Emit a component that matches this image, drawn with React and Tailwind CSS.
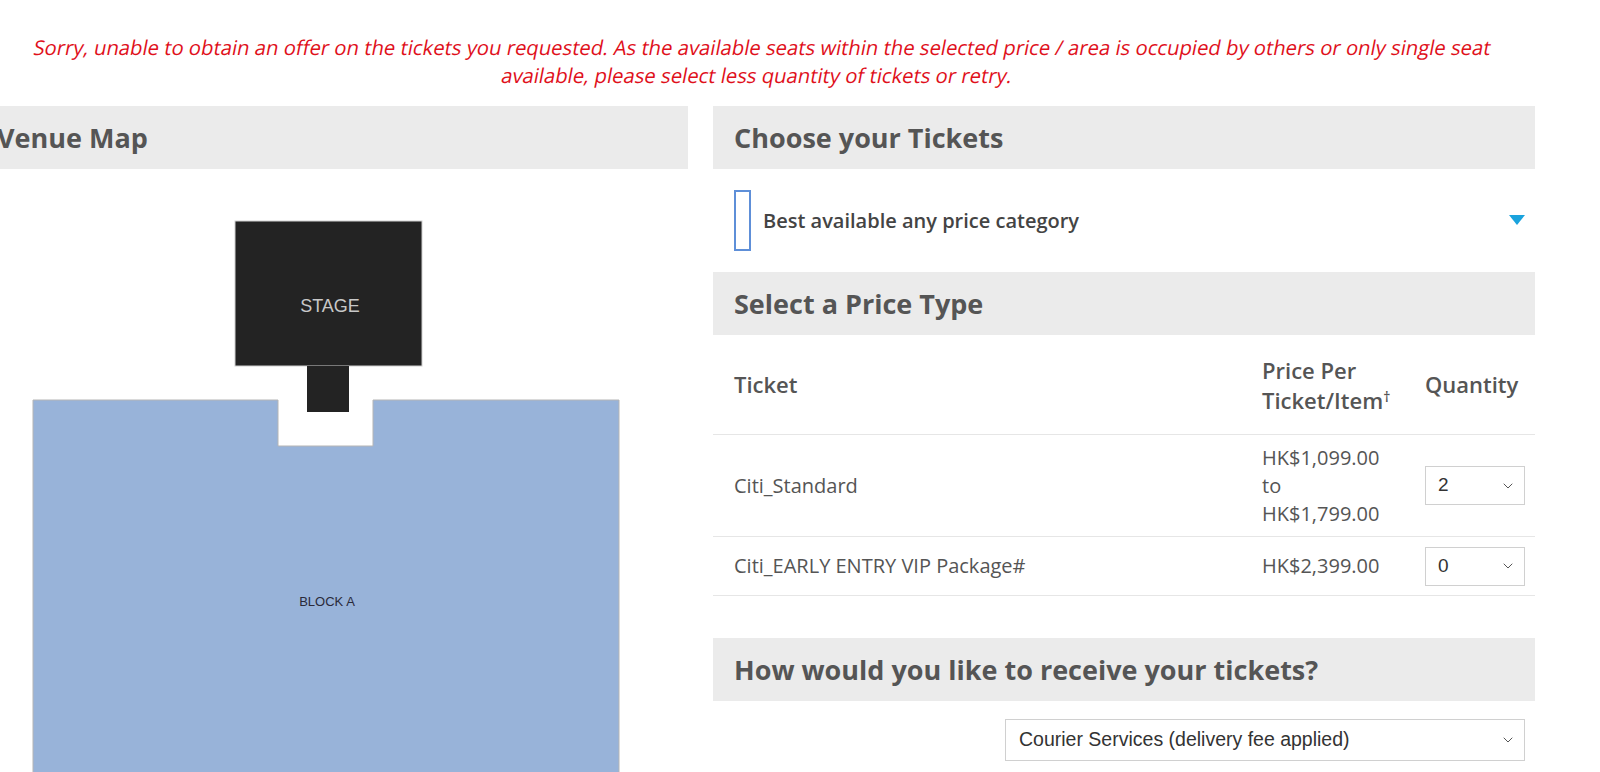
import { ChevronDown } from 'lucide-react';

function SectionHeader({ children }) {
    return (
        <div className="h-[63px] bg-[#ebebeb] px-[21px] flex items-center text-[27px] font-bold text-[#555] leading-none">
            {children}
        </div>
    );
}

function QtySelect({ value }) {
    return (
        <div className="w-[100px] h-[39px] border border-[#d0d0d0] bg-white flex items-center justify-between pl-[12px] pr-[8px] font-['Liberation_Sans',Arial,sans-serif] text-[19px] text-[#333]">
            <span>{value}</span>
            <ChevronDown className="w-[16px] h-[16px] text-[#555]" strokeWidth={1.5} />
        </div>
    );
}

function VenueMap() {
    return (
        <svg width="712" height="610" viewBox="0 0 712 610" className="block">
            <rect x="259" y="52" width="187" height="145" fill="#232323" stroke="#cfcfcf" strokeWidth="1" />
            <text x="354" y="143" textAnchor="middle" fontFamily="Liberation Sans, Arial, sans-serif" fontSize="18" fill="#c8c8c8">
                STAGE
            </text>
            <path d="M57 231 H302 V277 H397 V231 H643 V640 H57 Z" fill="#98b3d9" stroke="#b5b5b5" strokeWidth="1" />
            <rect x="331" y="197" width="42" height="46" fill="#232323" />
            <text x="351" y="437" textAnchor="middle" fontFamily="Liberation Sans, Arial, sans-serif" fontSize="13" fill="#2a2a3a">
                BLOCK A
            </text>
        </svg>
    );
}

function App() {
    return (
        <div className="w-[1600px] h-[772px] overflow-hidden bg-white font-['Open_Sans',sans-serif] text-[#555]">
            {/* error message */}
            <div className="pt-[33px] pr-[74px] text-center text-[20.25px] leading-[28px] text-[#e0101b] -skew-x-[11deg]">
                Sorry, unable to obtain an offer on the tickets you requested. As the available seats within the selected price / area is occupied by others or only single seat available, please select less quantity of tickets or retry.
            </div>

            <div className="flex gap-[25px] ml-[-24px] mt-[17px]">
                {/* left column */}
                <div className="w-[712px] shrink-0">
                    <SectionHeader>Venue Map</SectionHeader>
                    <VenueMap />
                </div>

                {/* right column */}
                <div className="w-[822px] shrink-0">
                    <SectionHeader>Choose your Tickets</SectionHeader>

                    <div className="h-[103px] flex items-center pl-[21px] pr-[10px]">
                        <div className="w-[17px] h-[61px] border-2 border-[#5e8fd8] mr-[12px]" />
                        <span className="text-[20px] font-semibold text-[#444]">Best available any price category</span>
                        <svg className="ml-auto" width="16" height="11" viewBox="0 0 16 11">
                            <path d="M0 0 H16 L8 10 Z" fill="#1aa3dd" />
                        </svg>
                    </div>

                    <SectionHeader>Select a Price Type</SectionHeader>

                    <div className="grid grid-cols-[528px_163px_131px] text-[20px]">
                        <div className="h-[100px] flex items-center pl-[21px] text-[22px] font-semibold border-b border-[#e6e6e6]">Ticket</div>
                        <div className="h-[100px] flex items-center pl-[21px] text-[22px] font-semibold leading-[30px] border-b border-[#e6e6e6]">
                            <div className="whitespace-nowrap">
                                Price Per
                                <br />
                                Ticket/Item<sup className="text-[14px]">†</sup>
                            </div>
                        </div>
                        <div className="h-[100px] flex items-center pl-[21px] text-[22px] font-semibold border-b border-[#e6e6e6]">Quantity</div>

                        <div className="h-[102px] flex items-center pl-[21px] border-b border-[#e6e6e6]">Citi_Standard</div>
                        <div className="h-[102px] flex items-center pl-[21px] leading-[28px] border-b border-[#e6e6e6]">
                            <div>
                                HK$1,099.00
                                <br />
                                to
                                <br />
                                HK$1,799.00
                            </div>
                        </div>
                        <div className="h-[102px] flex items-center pl-[21px] border-b border-[#e6e6e6]">
                            <QtySelect value="2" />
                        </div>

                        <div className="h-[59px] flex items-center pl-[21px] border-b border-[#e6e6e6]">Citi_EARLY ENTRY VIP Package#</div>
                        <div className="h-[59px] flex items-center pl-[21px] border-b border-[#e6e6e6]">HK$2,399.00</div>
                        <div className="h-[59px] flex items-center pl-[21px] border-b border-[#e6e6e6]">
                            <QtySelect value="0" />
                        </div>
                    </div>

                    <div className="mt-[42px]">
                        <SectionHeader>How would you like to receive your tickets?</SectionHeader>
                    </div>

                    <div className="flex justify-end pr-[10px] mt-[18px]">
                        <div className="w-[520px] h-[42px] border border-[#d0d0d0] flex items-center justify-between pl-[13px] pr-[8px] font-['Liberation_Sans',Arial,sans-serif] text-[19.5px] text-[#333]">
                            <span>Courier Services (delivery fee applied)</span>
                            <ChevronDown className="w-[16px] h-[16px] text-[#555]" strokeWidth={1.5} />
                        </div>
                    </div>
                </div>
            </div>
        </div>
    );
}

export default App;
